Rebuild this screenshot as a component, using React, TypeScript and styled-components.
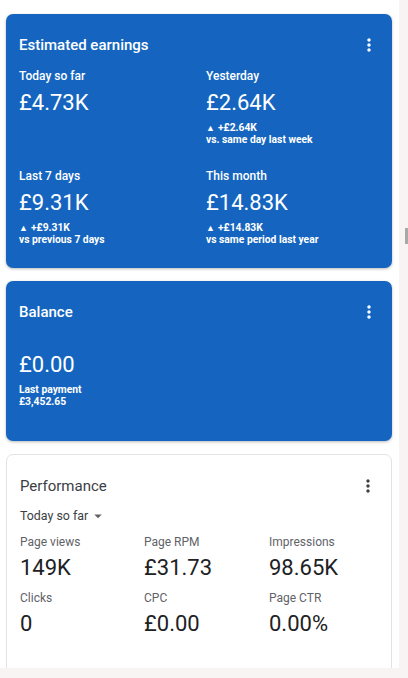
import React from 'react';
import styled, { createGlobalStyle } from 'styled-components';

const GlobalStyle = createGlobalStyle`
  html, body {
    margin: 0;
    padding: 0;
    background: #f8f4f4;
    font-family: Roboto, "Liberation Sans", Arial, sans-serif;
    -webkit-font-smoothing: antialiased;
  }
`;

const Page = styled('div')`
  display: flex;
  flex-direction: row;
  width: 408px;
  height: 678px;
  overflow: hidden;
`;

const Main = styled('main')`
  width: 399px;
  height: 668px;
  flex-shrink: 0;
  background: #ffffff;
  padding: 14px 7px 0 6px;
  box-sizing: border-box;
  display: flex;
  flex-direction: column;
  gap: 13px;
  overflow: hidden;
`;

const Side = styled('aside')`
  flex: 1;
  display: flex;
  flex-direction: column;
  align-items: flex-end;
`;

const ScrollThumb = styled('div')`
  margin-top: 228px;
  width: 3px;
  height: 16px;
  background: #a8a8a8;
`;

const Card = styled('section')<{ $blue?: boolean; $minHeight?: number }>`
  box-sizing: border-box;
  border-radius: 7px;
  padding: 19px 13px 22px 13px;
  min-height: ${(p) => (p.$minHeight ? `${p.$minHeight}px` : 'auto')};
  flex-shrink: 0;
  background: ${(p) => (p.$blue ? '#1565c0' : '#ffffff')};
  color: ${(p) => (p.$blue ? '#ffffff' : '#202124')};
  border: ${(p) => (p.$blue ? 'none' : '1px solid #e3e3e3')};
  box-shadow: ${(p) => (p.$blue ? '0 1px 3px rgba(0, 0, 0, 0.28)' : 'none')};
`;

const CardHeader = styled('div')`
  display: flex;
  align-items: center;
  justify-content: space-between;
  height: 24px;
`;

const CardTitle = styled('h2')<{ $light?: boolean }>`
  margin: 0;
  font-size: 15px;
  line-height: 24px;
  font-weight: ${(p) => (p.$light ? 400 : 500)};
  color: ${(p) => (p.$light ? '#3c4043' : 'inherit')};
`;

const MenuButton = styled('button')<{ $dark?: boolean }>`
  border: none;
  background: none;
  padding: 0;
  width: 20px;
  height: 20px;
  display: flex;
  color: ${(p) => (p.$dark ? '#3c4043' : '#ffffff')};

  svg {
    width: 20px;
    height: 20px;
    fill: currentColor;
  }
`;

const EarningsGrid = styled('div')`
  display: grid;
  grid-template-columns: 187px 1fr;
  row-gap: 22px;
  margin-top: 11px;
`;

const Stat = styled('div')`
  display: flex;
  flex-direction: column;
`;

const StatLabel = styled('div')`
  font-size: 12px;
  line-height: 16px;
  font-weight: 500;
`;

const StatValue = styled('div')<{ $gap?: number }>`
  font-size: 22px;
  line-height: 28px;
  font-weight: 400;
  margin-top: ${(p) => p.$gap ?? 5}px;
`;

const Delta = styled('div')`
  margin-top: 5px;
  font-size: 10.3px;
  line-height: 12px;
  font-weight: 700;
`;

const Triangle = styled('span')`
  font-size: 9px;
  margin-right: 3px;
  vertical-align: 0;
`;

const Performance = styled(Card)`
  padding-bottom: 40px;
`;

const RangePicker = styled('div')`
  display: flex;
  align-items: center;
  margin-top: 9px;
  font-size: 12.4px;
  line-height: 16px;
  color: #3c4043;

  svg {
    width: 18px;
    height: 18px;
    fill: #5f6368;
    margin-left: 1px;
  }
`;

const MetricsGrid = styled('div')`
  display: grid;
  grid-template-columns: 124px 125px 1fr;
  row-gap: 8px;
  margin-top: 9px;
`;

const MetricLabel = styled('div')`
  font-size: 12px;
  line-height: 16px;
  color: #5f6368;
`;

const MetricValue = styled('div')`
  margin-top: 4px;
  font-size: 22px;
  line-height: 28px;
  color: #202124;
`;

const MoreVert = () => (
  <svg viewBox="0 0 24 24" aria-hidden="true">
    <path d="M12 8c1.1 0 2-.9 2-2s-.9-2-2-2-2 .9-2 2 .9 2 2 2zm0 2c-1.1 0-2 .9-2 2s.9 2 2 2 2-.9 2-2-.9-2-2-2zm0 6c-1.1 0-2 .9-2 2s.9 2 2 2 2-.9 2-2-.9-2-2-2z" />
  </svg>
);

const ArrowDrop = () => (
  <svg viewBox="0 0 24 24" aria-hidden="true">
    <path d="M7 10l5 5 5-5z" />
  </svg>
);

const earnings = [
  { label: 'Today so far', value: '£4.73K' },
  { label: 'Yesterday', value: '£2.64K', delta: '+£2.64K', note: 'vs. same day last week' },
  { label: 'Last 7 days', value: '£9.31K', delta: '+£9.31K', note: 'vs previous 7 days' },
  { label: 'This month', value: '£14.83K', delta: '+£14.83K', note: 'vs same period last year' },
];

const metrics = [
  { label: 'Page views', value: '149K' },
  { label: 'Page RPM', value: '£31.73' },
  { label: 'Impressions', value: '98.65K' },
  { label: 'Clicks', value: '0' },
  { label: 'CPC', value: '£0.00' },
  { label: 'Page CTR', value: '0.00%' },
];

const App: React.FC = () => {
  return (
    <>
      <GlobalStyle />
      <Page>
        <Main>
          <Card $blue>
            <CardHeader>
              <CardTitle>Estimated earnings</CardTitle>
              <MenuButton aria-label="More options">
                <MoreVert />
              </MenuButton>
            </CardHeader>
            <EarningsGrid>
              {earnings.map((item) => (
                <Stat key={item.label}>
                  <StatLabel>{item.label}</StatLabel>
                  <StatValue>{item.value}</StatValue>
                  {item.delta && (
                    <Delta>
                      <Triangle>▲</Triangle>
                      {item.delta}
                      <br />
                      {item.note}
                    </Delta>
                  )}
                </Stat>
              ))}
            </EarningsGrid>
          </Card>

          <Card $blue $minHeight={160}>
            <CardHeader>
              <CardTitle>Balance</CardTitle>
              <MenuButton aria-label="More options">
                <MoreVert />
              </MenuButton>
            </CardHeader>
            <Stat>
              <StatValue $gap={27}>£0.00</StatValue>
              <Delta>
                Last payment
                <br />
                £3,452.65
              </Delta>
            </Stat>
          </Card>

          <Performance>
            <CardHeader>
              <CardTitle $light>Performance</CardTitle>
              <MenuButton $dark aria-label="More options">
                <MoreVert />
              </MenuButton>
            </CardHeader>
            <RangePicker>
              Today so far
              <ArrowDrop />
            </RangePicker>
            <MetricsGrid>
              {metrics.map((m) => (
                <Stat key={m.label}>
                  <MetricLabel>{m.label}</MetricLabel>
                  <MetricValue>{m.value}</MetricValue>
                </Stat>
              ))}
            </MetricsGrid>
          </Performance>
        </Main>
        <Side>
          <ScrollThumb />
        </Side>
      </Page>
    </>
  );
};

export default App;
